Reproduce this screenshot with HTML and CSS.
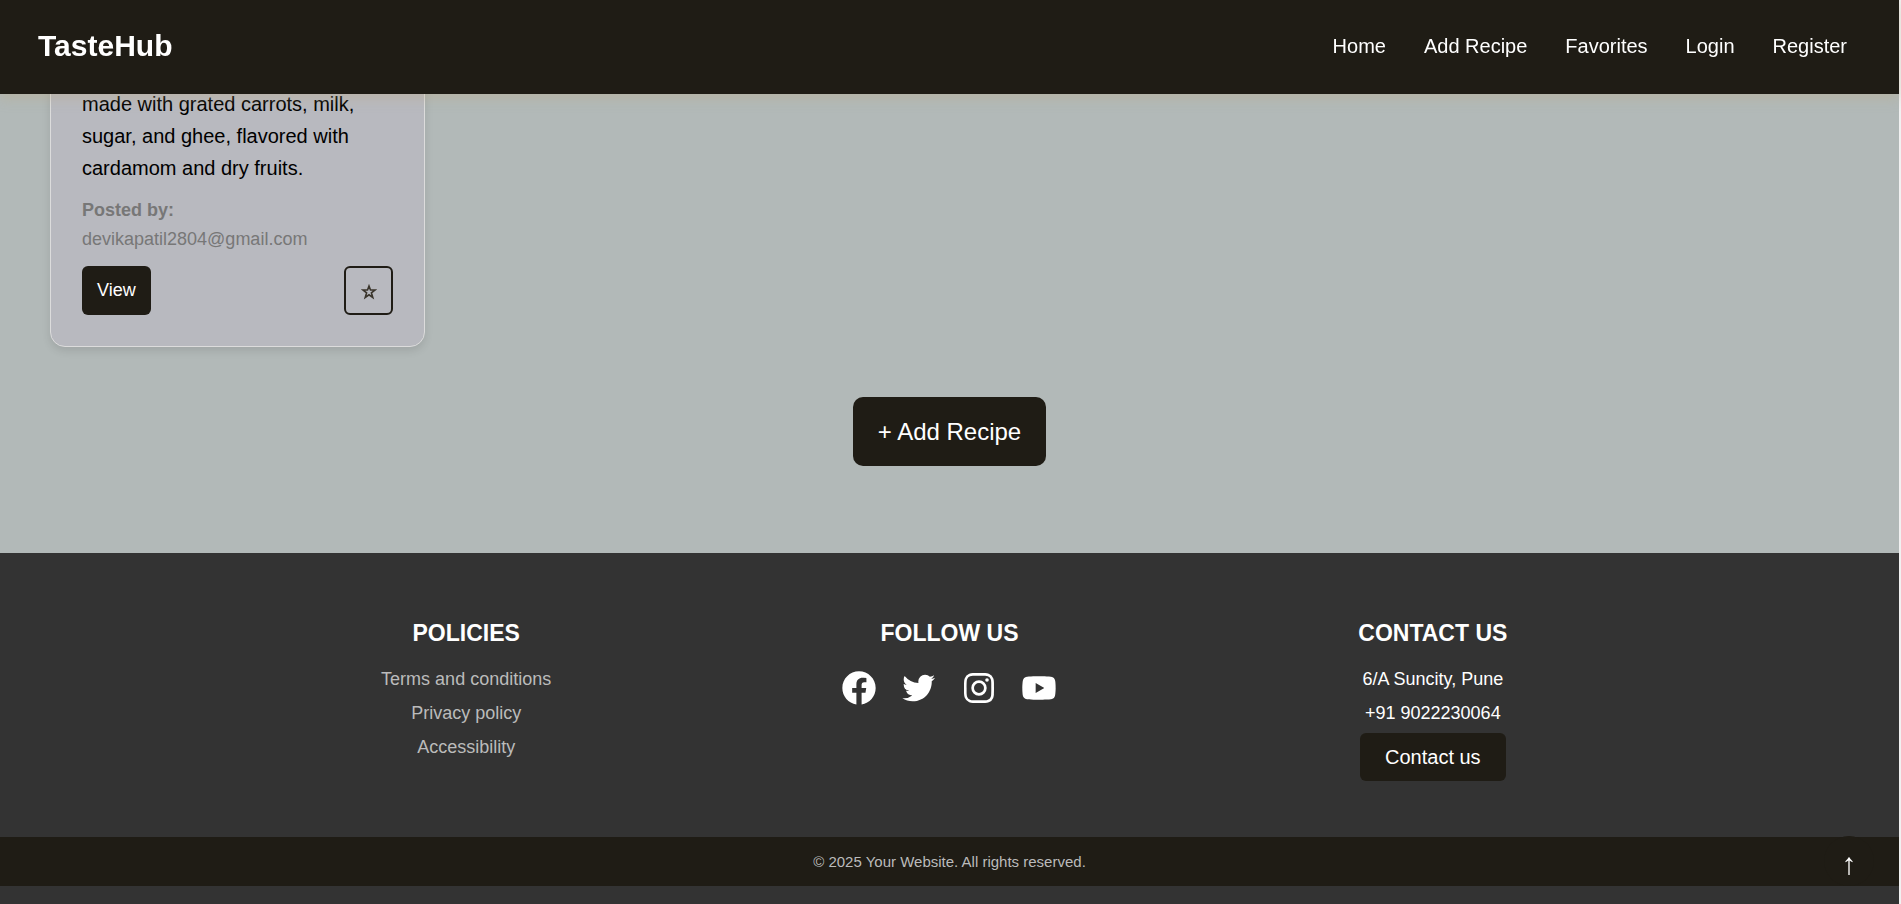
FILE: index.html
```html
<!DOCTYPE html>
<html lang="en">
<head>
<meta charset="utf-8">
<title>TasteHub</title>
<link rel="stylesheet" href="styles.css">
</head>
<body>
<header class="header">
  <a class="logo" href="#">TasteHub</a>
  <nav class="nav">
    <a href="#">Home</a>
    <a href="#">Add Recipe</a>
    <a href="#">Favorites</a>
    <a href="#">Login</a>
    <a href="#">Register</a>
  </nav>
</header>
<main class="main">
  <div class="recipes">
    <article class="card">
      <p class="description">made with grated carrots, milk, sugar, and ghee, flavored with cardamom and dry fruits.</p>
      <p class="author"><strong>Posted by:</strong> devikapatil2804@gmail.com</p>
      <div class="actions">
        <button class="view" type="button">View</button>
        <button class="star" type="button" aria-label="Add to favorites"><svg viewBox="0 0 14 14"><path d="M7 1.8 8.3 5.3H12.2L9.1 7.7 10.3 11.8 7 9.4 3.7 11.8 4.9 7.7 1.8 5.3H5.7Z"/></svg></button>
      </div>
    </article>
  </div>
  <button class="add-recipe" type="button">+ Add Recipe</button>
</main>
<footer class="footer">
  <div class="columns">
    <section class="column">
      <h3>POLICIES</h3>
      <a href="#">Terms and conditions</a>
      <a href="#">Privacy policy</a>
      <a href="#">Accessibility</a>
    </section>
    <section class="column">
      <h3>FOLLOW US</h3>
      <div class="social">
        <a href="#" aria-label="Facebook"><svg viewBox="0 0 24 24"><path d="M12.001 2.002c-5.522 0-9.999 4.477-9.999 9.999 0 4.99 3.656 9.126 8.437 9.879v-6.988h-2.54v-2.891h2.54V9.798c0-2.508 1.493-3.891 3.776-3.891 1.094 0 2.24.195 2.24.195v2.459h-1.264c-1.24 0-1.628.772-1.628 1.563v1.875h2.771l-.443 2.891h-2.328v6.988C18.344 21.129 22 16.992 22 12.001c0-5.522-4.477-9.999-9.999-9.999z"/></svg></a>
        <a href="#" aria-label="Twitter"><svg viewBox="0 0 24 24"><path d="M19.633 7.997c.013.175.013.349.013.523 0 5.325-4.053 11.461-11.46 11.461-2.282 0-4.402-.661-6.186-1.809.324.037.636.05.973.05a8.07 8.07 0 0 0 5.001-1.721 4.036 4.036 0 0 1-3.767-2.793c.249.037.499.062.761.062.361 0 .724-.05 1.061-.137a4.027 4.027 0 0 1-3.23-3.953v-.05c.537.299 1.16.486 1.82.511a4.022 4.022 0 0 1-1.796-3.354c0-.748.199-1.434.548-2.032a11.457 11.457 0 0 0 8.306 4.215c-.062-.3-.1-.611-.1-.923a4.026 4.026 0 0 1 4.028-4.028c1.16 0 2.207.486 2.943 1.272a7.957 7.957 0 0 0 2.556-.973 4.02 4.02 0 0 1-1.771 2.22 8.073 8.073 0 0 0 2.319-.624 8.645 8.645 0 0 1-2.019 2.083z"/></svg></a>
        <a href="#" aria-label="Instagram"><svg viewBox="0 0 24 24"><path d="M11.999 7.377a4.623 4.623 0 1 0 0 9.248 4.623 4.623 0 0 0 0-9.248zm0 7.627a3.004 3.004 0 1 1 0-6.008 3.004 3.004 0 0 1 0 6.008z"/><circle cx="16.806" cy="7.207" r="1.078"/><path d="M20.533 6.111A4.605 4.605 0 0 0 17.9 3.479a6.606 6.606 0 0 0-2.186-.42c-.963-.042-1.268-.054-3.71-.054s-2.755 0-3.71.054a6.554 6.554 0 0 0-2.184.42 4.6 4.6 0 0 0-2.633 2.632 6.585 6.585 0 0 0-.419 2.186c-.043.962-.056 1.267-.056 3.71 0 2.442 0 2.753.056 3.71.015.748.156 1.486.419 2.187a4.61 4.61 0 0 0 2.634 2.632 6.584 6.584 0 0 0 2.185.45c.963.042 1.268.055 3.71.055s2.755 0 3.71-.055a6.615 6.615 0 0 0 2.186-.419 4.613 4.613 0 0 0 2.633-2.633c.263-.7.404-1.438.419-2.186.043-.962.056-1.267.056-3.71s0-2.753-.056-3.71a6.581 6.581 0 0 0-.421-2.217zm-1.218 9.532a5.043 5.043 0 0 1-.311 1.688 2.987 2.987 0 0 1-1.712 1.711 4.985 4.985 0 0 1-1.67.311c-.95.044-1.218.055-3.654.055-2.438 0-2.687 0-3.655-.055a4.96 4.96 0 0 1-1.669-.311 2.985 2.985 0 0 1-1.719-1.711 5.08 5.08 0 0 1-.311-1.669c-.043-.95-.053-1.218-.053-3.654 0-2.437 0-2.686.053-3.655a5.038 5.038 0 0 1 .311-1.687c.305-.789.93-1.41 1.719-1.712a5.01 5.01 0 0 1 1.669-.311c.951-.043 1.218-.055 3.655-.055s2.687 0 3.654.055a4.96 4.96 0 0 1 1.67.311 2.991 2.991 0 0 1 1.712 1.712 5.08 5.08 0 0 1 .311 1.669c.043.951.055 1.218.055 3.655 0 2.436 0 2.698-.043 3.654h-.011z"/></svg></a>
        <a href="#" aria-label="YouTube"><svg viewBox="0 0 24 24"><path d="M21.593 7.203a2.506 2.506 0 0 0-1.762-1.766C18.265 5.007 12 5 12 5s-6.264-.007-7.831.404a2.56 2.56 0 0 0-1.766 1.778c-.413 1.566-.417 4.814-.417 4.814s-.004 3.264.406 4.814c.23.857.905 1.534 1.763 1.765 1.582.43 7.83.437 7.83.437s6.265.007 7.831-.403a2.515 2.515 0 0 0 1.767-1.763c.414-1.565.417-4.812.417-4.812s.02-3.265-.407-4.831zM9.996 15.005l.005-6 5.207 3.005-5.212 2.995z"/></svg></a>
      </div>
    </section>
    <section class="column">
      <h3>CONTACT US</h3>
      <p>6/A Suncity, Pune</p>
      <p>+91 9022230064</p>
      <button class="contact" type="button">Contact us</button>
    </section>
  </div>
  <p class="copyright">© 2025 Your Website. All rights reserved.</p>
</footer>
<a class="to-top" href="#" aria-label="Back to top">↑</a>
</body>
</html>
```
FILE: styles.css
```css
* {
  box-sizing: border-box;
  margin: 0;
  padding: 0;
}

body {
  min-height: 100vh;
  display: flex;
  flex-direction: column;
  border-right: 2px solid #f1f1f1;
  background: #b2b9b8;
  color: #000;
  font-family: "Liberation Sans", Arial, sans-serif;
  font-size: 20px;
}

a {
  color: inherit;
  text-decoration: none;
}

button {
  border: 0;
  background: #1f1c15;
  color: #fff;
  font-family: inherit;
  cursor: pointer;
}

.header {
  position: fixed;
  top: 0;
  left: 0;
  right: 2px;
  z-index: 10;
  display: flex;
  align-items: center;
  justify-content: space-between;
  padding: 23px 52px 25px 38px;
  background: #1f1c15;
  color: #fff;
  box-shadow: 0 4px 12px rgba(188, 170, 130, 0.4);
}

.logo {
  font-size: 30px;
  font-weight: bold;
  line-height: 46px;
}

.nav {
  display: flex;
  gap: 38px;
}

.main {
  padding: 56px 50px 87px;
  text-align: center;
}

.recipes {
  display: grid;
  grid-template-columns: repeat(auto-fill, 375px);
  margin-bottom: 50px;
  text-align: left;
}

.card {
  padding: 31px;
  border: 1px solid #dcdcdc;
  border-radius: 15px;
  background: #b8b9bf;
  box-shadow: 0 4px 8px rgba(0, 0, 0, 0.1);
}

.description {
  margin-bottom: 12px;
  line-height: 32px;
}

.author {
  margin-bottom: 12px;
  color: #777;
  font-size: 18px;
  line-height: 29px;
}

.author strong {
  display: block;
}

.actions {
  display: flex;
  justify-content: space-between;
}

.view {
  padding: 0 15px;
  border-radius: 6px;
  font-size: 18px;
  line-height: 49px;
}

.star {
  display: flex;
  align-items: center;
  justify-content: center;
  width: 49px;
  height: 49px;
  padding-top: 3px;
  border: 2px solid #1f1c15;
  border-radius: 6px;
  background: transparent;
}

.star svg {
  width: 16px;
  height: 16px;
  fill: none;
  stroke: #3a352c;
  stroke-width: 1.4;
}

.add-recipe {
  padding: 0 25px;
  border-radius: 10px;
  font-size: 24px;
  line-height: 69px;
}

.footer {
  flex: 1;
  background: #333;
  color: #fff;
  text-align: center;
}

.columns {
  display: grid;
  grid-template-columns: repeat(3, 1fr);
  gap: 50px;
  max-width: 1400px;
  margin: 0 auto;
  padding: 60px 0 56px;
}

.column {
  font-size: 18px;
  line-height: 34px;
}

.column > a {
  display: block;
  color: #bbb;
}

.column h3 {
  margin-bottom: 9px;
  font-size: 23px;
  line-height: 40px;
}

.social {
  display: flex;
  justify-content: center;
  gap: 20px;
  padding-top: 6px;
}

.social svg {
  display: block;
  width: 40px;
  height: 40px;
  fill: #fff;
}

.contact {
  margin-top: 3px;
  padding: 0 25px;
  border-radius: 6px;
  font-size: 20px;
  line-height: 48px;
}

.copyright {
  background: #1f1c15;
  color: #bbb;
  font-size: 15px;
  line-height: 49px;
}

.to-top {
  position: fixed;
  right: 27px;
  bottom: 18px;
  width: 50px;
  height: 50px;
  border-radius: 50%;
  background: #1f1c15;
  color: #fff;
  font-size: 30px;
  line-height: 56px;
  text-align: center;
}
```
